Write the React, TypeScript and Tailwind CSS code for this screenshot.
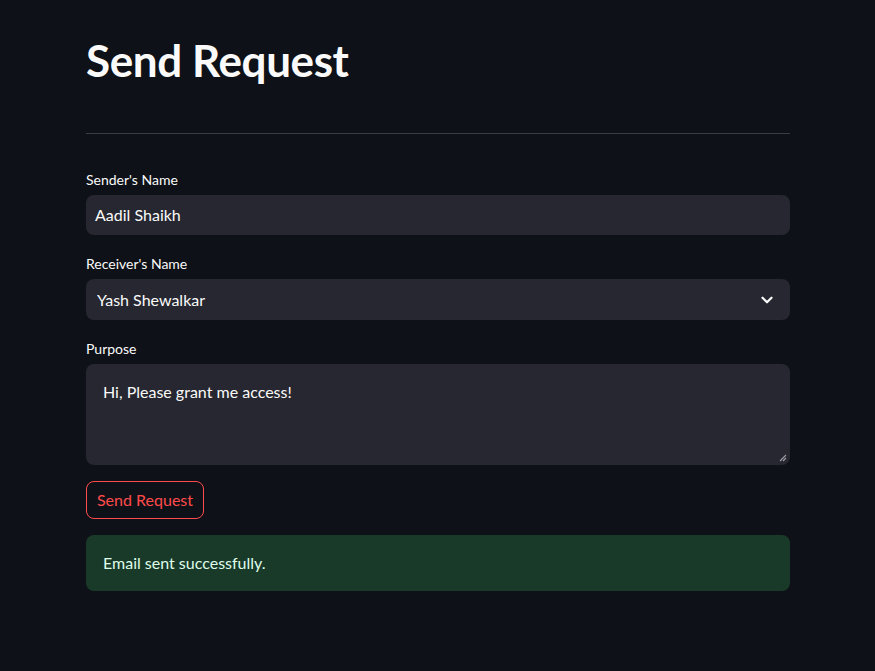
import { ChevronDown } from 'lucide-react';

function Label({ children }: { children: React.ReactNode }) {
    return <label className="block text-[14px] leading-[17px] text-[#fafafa] mb-[4px] h-[20px]">{children}</label>;
}

export default function App() {
    return (
        <div className="min-h-[671px] w-full bg-[#0e1117] text-[#fafafa] font-['Lato',sans-serif]">
            <div className="w-[704px] ml-[86px] pt-[34px]">
                <h1 className="text-[44px] leading-[52px] font-bold tracking-[-0.4px] text-[#fafafa]">Send Request</h1>
                <hr className="mt-[47px] border-0 h-px bg-[#3b3d44]" />

                <div className="mt-[37px]">
                    <Label>Sender's Name</Label>
                    <div className="h-[40px] rounded-[8px] bg-[#262730] flex items-center px-[9px] text-[16px]">
                        Aadil Shaikh
                    </div>
                </div>

                <div className="mt-[20px]">
                    <Label>Receiver's Name</Label>
                    <div className="h-[41px] rounded-[8px] bg-[#262730] flex items-center justify-between pl-[11px] pr-[14px] text-[16px]">
                        <span>Yash Shewalkar</span>
                        <ChevronDown size={18} strokeWidth={3} className="text-[#fafafa]" />
                    </div>
                </div>

                <div className="mt-[20px]">
                    <Label>Purpose</Label>
                    <div className="relative h-[101px] rounded-[8px] bg-[#262730] px-[17px] pt-[16px] text-[16px] leading-[24px]">
                        Hi, Please grant me access!
                        <svg width="8" height="8" viewBox="0 0 8 8" className="absolute right-[3px] bottom-[3px]">
                            <path d="M7 1 L1 7 M7 4 L4 7" stroke="#9a9aa0" strokeWidth="1.2" />
                        </svg>
                    </div>
                </div>

                <button className="mt-[16px] h-[38px] w-[118px] rounded-[8px] border border-[#ff4b4b] text-[#ff4b4b] text-[16px] flex items-center justify-center">
                    Send Request
                </button>

                <div className="mt-[16px] h-[56px] rounded-[8px] bg-[#1a3a29] flex items-center px-[17px] text-[16px] text-[#dffde9]">
                    Email sent successfully.
                </div>
            </div>
        </div>
    );
}
